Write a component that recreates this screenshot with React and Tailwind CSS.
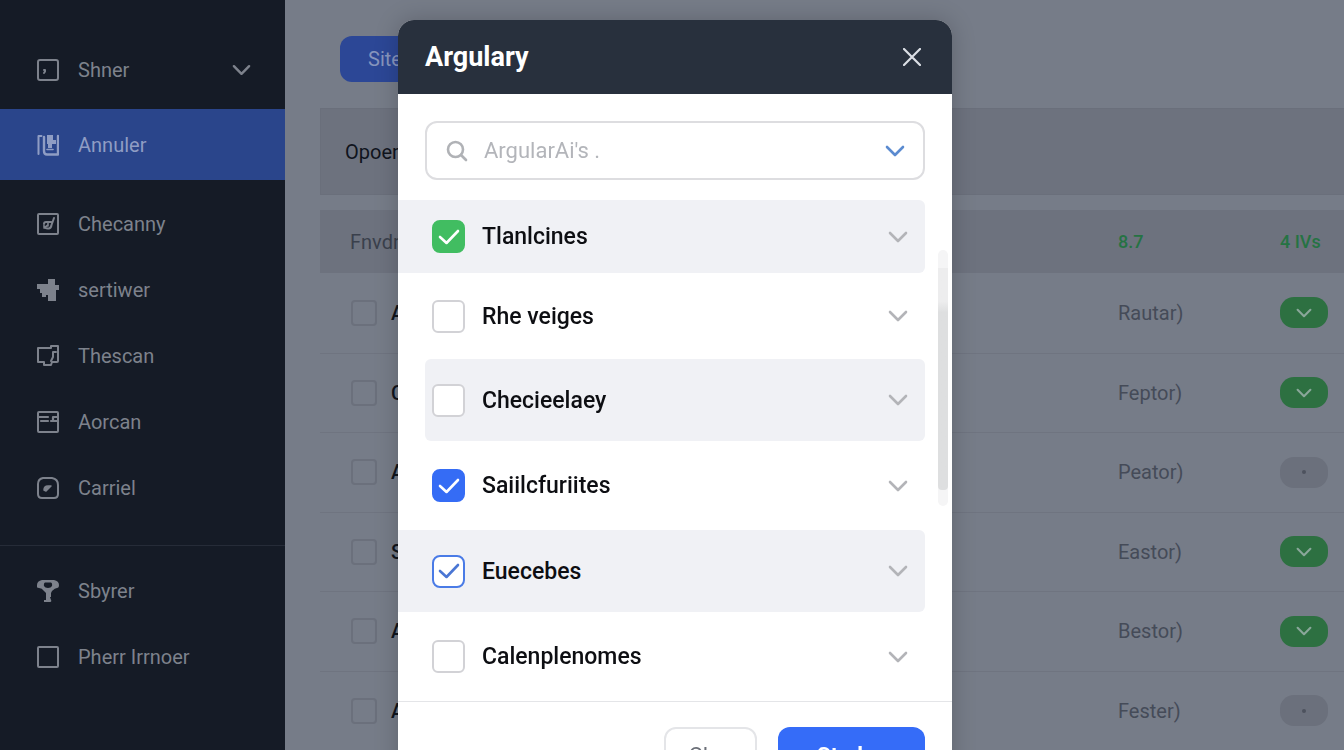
import React, { useState } from 'react';

const stroke = {
    fill: 'none',
    stroke: 'currentColor',
    strokeWidth: 2,
    strokeLinecap: 'round',
    strokeLinejoin: 'round',
};

const Chevron = ({ className }) => (
    <svg viewBox="0 0 20 12" className={className} {...stroke} strokeWidth={2.6} aria-hidden="true">
        <path d="M2 2l8 8 8-8" />
    </svg>
);

const Check = ({ className }) => (
    <svg viewBox="0 0 22 16" className={className} {...stroke} strokeWidth={2.6} aria-hidden="true">
        <path d="M2 8l6.5 6L20 2" />
    </svg>
);

// Ícones do menu lateral, todos numa grade de 22x22
const icons = {
    panel: (
        <>
            <rect x="1" y="1" width="20" height="20" rx="2" />
            <path d="M7 11h1v1.500l-1 1.500" />
        </>
    ),
    book: (
        <>
            <path d="M1.500 20V2h3" />
            <path d="M7 3v14q0 3.500 3 3.500h11V2" strokeWidth="2.4" />
            <path d="M10 1h6v5h3v4h-4v4h-4v-4h-1z" fill="currentColor" stroke="none" />
            <path d="M10 15.500h6" strokeWidth="1.600" />
        </>
    ),
    checkbox: (
        <>
            <rect x="1" y="1" width="20" height="20" rx="1" />
            <path d="M14 9H9q-2 0-2 2M7 13q1 3 5 2.500 2-.5 2.500-3.500L17 5" />
            <path d="M11 9v4M7 15l4-3" strokeWidth="1.600" />
        </>
    ),
    plugin: (
        <path
            d="M0 5h11V0h7v6h5v5h-4v11h-8v-6H9v2H5v-4H3v-4H0z"
            fill="currentColor"
            stroke="none"
        />
    ),
    chat: (
        <>
            <path d="M14 3H1v14h6v3h7l1-3h5q1 0 1-1V1h-7z" />
            <path d="M19 7h-3v5l-2 4" />
        </>
    ),
    table: (
        <>
            <rect x="1" y="1" width="20" height="20" rx="1" />
            <path d="M1 6h10M4 10h7M14 10h2V6h4M16 10h4" strokeWidth="2.200" />
        </>
    ),
    gauge: (
        <>
            <path d="M6 1h9q6 1 6 7v9q0 4-4 4H5q-4 0-4-4V7q0-5 5-6z" />
            <path d="M7 13q0-4 4-4h3l-5 5z" fill="currentColor" strokeWidth="1.500" />
        </>
    ),
    lamp: (
        <>
            <path
                d="M5 0h12q5 1 5 5 0 3-2 3t-5 3l-1 2v4h-1l1 3q1 2-1 2H7v-2h2v-7L7 11Q5 8 2 8T0 5q0-4 5-5zM8 2.500Q6.500 3 7 6q1 2 4 2t4-2q.5-3-1-3.500z"
                fill="currentColor"
                fillRule="evenodd"
                stroke="none"
            />
        </>
    ),
    square: <rect x="1" y="1" width="20" height="20" rx="1" />,
};

const MenuIcon = ({ name }) => (
    <svg viewBox="0 0 22 22" className="w-[22px] h-[22px] shrink-0" {...stroke} aria-hidden="true">
        {icons[name]}
    </svg>
);

const menuItems = [
    { icon: 'checkbox', label: 'Checanny' },
    { icon: 'plugin', label: 'sertiwer' },
    { icon: 'chat', label: 'Thescan' },
    { icon: 'table', label: 'Aorcan' },
    { icon: 'gauge', label: 'Carriel' },
];

const footerItems = [
    { icon: 'lamp', label: 'Sbyrer' },
    { icon: 'square', label: 'Pherr Irrnoer' },
];

const rows = [
    { name: 'A', role: 'Rautar)', active: true },
    { name: 'C', role: 'Feptor)', active: true },
    { name: 'A', role: 'Peator)', active: false },
    { name: 'S', role: 'Eastor)', active: true },
    { name: 'A', role: 'Bestor)', active: true },
    { name: 'A', role: 'Fester)', active: false },
];

const initialOptions = [
    { label: 'Tlanlcines', checked: true, tone: 'green', row: 'h-[73px] pl-[34px] bg-[#f0f1f5]' },
    { label: 'Rhe veiges', checked: false, tone: 'blue', row: 'h-[86px] pl-[34px]' },
    { label: 'Checieelaey', checked: false, tone: 'blue', row: 'h-[82px] ml-[27px] pl-[7px] rounded-l-md bg-[#f0f1f5]' },
    { label: 'Saiilcfuriites', checked: true, tone: 'blue', row: 'h-[89px] pl-[34px]' },
    { label: 'Euecebes', checked: true, tone: 'outline', row: 'h-[82px] pl-[34px] bg-[#f0f1f5]' },
    { label: 'Calenplenomes', checked: false, tone: 'blue', row: 'h-[89px] pl-[34px]' },
];

const boxTones = {
    green: 'border-[#41bd61] bg-[#41bd61]',
    blue: 'border-[#356cf5] bg-[#356cf5]',
    outline: 'border-[#4a7be6] bg-white',
};

const MenuLink = ({ icon, label }) => (
    <a href="#" className="flex items-center h-[66px] pl-[37px] gap-[19px] text-xl text-[#7d828c]">
        <MenuIcon name={icon} />
        {label}
    </a>
);

const Sidebar = () => (
    <nav className="w-[285px] shrink-0 bg-[#151b26] pt-[31px]">
        <button className="flex items-center w-full h-[78px] pl-[37px] pr-[34px] gap-[19px] text-xl text-[#7d828c]">
            <MenuIcon name="panel" />
            Shner
            <Chevron className="w-[19px] h-3 ml-auto" />
        </button>
        <a href="#" className="flex items-center h-[71px] pl-[37px] gap-[19px] text-xl text-[#8f9dc4] bg-[#2a458b]">
            <MenuIcon name="book" />
            Annuler
        </a>
        <div className="pt-[11px] pb-6 border-b border-[#262c38]">
            {menuItems.map((item) => <MenuLink key={item.label} {...item} />)}
        </div>
        <div className="pt-3">
            {footerItems.map((item) => <MenuLink key={item.label} {...item} />)}
        </div>
    </nav>
);

const StatusPill = ({ active }) => (
    <span
        className={`flex items-center justify-center w-12 h-[31px] rounded-[14px] ${
            active ? 'bg-[#2d7041] text-[#8aa79a]' : 'bg-[#6b707c] text-[#4d525e]'
        }`}
    >
        {active ? <Chevron className="w-4 h-[10px]" /> : <span className="w-1 h-1 rounded-full bg-current" />}
    </span>
);

const MainContent = () => (
    <main className="flex-1 min-w-0 bg-[#767c88] pl-[35px]">
        <div className="pt-9 pl-5 pb-[26px]">
            <button className="h-[46px] px-7 rounded-xl bg-[#2c4796] text-xl text-[#8795bd]">Site</button>
        </div>
        <section className="flex items-center h-[87px] pl-6 bg-[#6d727e] border-l border-y border-[#6a6f7b] text-xl text-[#10141d]">
            Opoer
        </section>
        <table className="w-full mt-[15px] table-fixed text-left">
            <colgroup>
                <col className="w-[71px]" />
                <col />
                <col className="w-[162px]" />
                <col className="w-16" />
            </colgroup>
            <thead>
                <tr className="h-[63px] bg-[#6d727e] text-lg text-[#257343]">
                    <th colSpan={2} className="pl-[30px] text-xl font-normal text-[#3a404c]">Fnvdr</th>
                    <th className="font-medium">8.7</th>
                    <th className="font-medium">4 IVs</th>
                </tr>
            </thead>
            <tbody>
                {rows.map((row, i) => (
                    <tr key={i} className="h-[79px] odd:h-20 border-b border-[#6f7480]">
                        <td className="pl-[31px]">
                            <input
                                type="checkbox"
                                aria-label={row.name}
                                className="block appearance-none w-[26px] h-[26px] rounded border-2 border-[#6b707c]"
                            />
                        </td>
                        <td className="text-xl font-medium text-[#10141d]">{row.name}</td>
                        <td className="text-xl text-[#454b58]">{row.role}</td>
                        <td><StatusPill active={row.active} /></td>
                    </tr>
                ))}
            </tbody>
        </table>
    </main>
);

const OptionRow = ({ option, onToggle }) => {
    const id = `option-${option.label.replace(' ', '-')}`;
    return (
        <li className={`flex items-center pr-[17px] rounded-r-md ${option.row}`}>
            <span className="grid w-[33px] h-[33px] shrink-0">
                <input
                    id={id}
                    type="checkbox"
                    checked={option.checked}
                    onChange={onToggle}
                    className={`col-start-1 row-start-1 appearance-none w-[33px] h-[33px] border-2 ${
                        option.checked ? `rounded-lg ${boxTones[option.tone]}` : 'rounded-md border-[#d2d2d6] bg-white'
                    }`}
                />
                {option.checked && (
                    <Check
                        className={`col-start-1 row-start-1 place-self-center w-[22px] h-4 pointer-events-none ${
                            option.tone === 'outline' ? 'text-[#4a76d4]' : 'text-white'
                        }`}
                    />
                )}
            </span>
            <label htmlFor={id} className="flex-1 pt-0.5 pl-[17px] text-[23px] font-medium text-[#0d0e12]">{option.label}</label>
            <button aria-label={`Abrir ${option.label}`}>
                <Chevron className="block w-5 h-3 text-[#b3b4b8]" />
            </button>
        </li>
    );
};

const App = () => {
    const [options, setOptions] = useState(initialOptions);
    const [search, setSearch] = useState('');

    const toggleOption = (index) => {
        setOptions(options.map((o, i) => (i === index ? { ...o, checked: !o.checked } : o)));
    };

    return (
        <div className="flex h-screen overflow-hidden font-['Roboto',sans-serif]">
            <Sidebar />
            <MainContent />

            <div className="fixed inset-0 flex items-start justify-center pt-5 pl-1.5 overflow-hidden">
                <div role="dialog" aria-labelledby="dialog-title" className="w-full max-w-[554px] rounded-2xl bg-white shadow-[0_0_24px_rgba(0,0,0,0.2)]">
                    <header className="flex items-center justify-between h-[74px] pl-[27px] pr-[31px] rounded-t-2xl bg-[#28303d]">
                        <h1 id="dialog-title" className="text-[27px] font-bold text-white">Argulary</h1>
                        <button aria-label="Fechar">
                            <svg viewBox="0 0 18 18" className="block w-[18px] h-[18px] text-[#dcdfe6]" {...stroke} strokeWidth={2.2}>
                                <path d="M1 1l16 16M17 1L1 17" />
                            </svg>
                        </button>
                    </header>

                    <div className="px-[27px] pt-[27px] pb-5">
                        <div className="flex items-center h-[59px] pl-[19px] pr-[18px] gap-4 rounded-xl border-2 border-[#dddde0]">
                            <svg viewBox="0 0 22 22" className="w-[22px] h-[22px] shrink-0 text-[#b0b2b6]" {...stroke} strokeWidth={2.6}>
                                <circle cx="9.500" cy="9.500" r="7.500" />
                                <path d="M15 15l5 5" />
                            </svg>
                            <input
                                type="text"
                                aria-label="Pesquisar"
                                placeholder="ArgularAi's ."
                                value={search}
                                onChange={(e) => setSearch(e.target.value)}
                                className="flex-1 min-w-0 text-[22px] outline-none placeholder:text-[#b3b5ba]"
                            />
                            <Chevron className="w-5 h-3 text-[#5b8bd0]" />
                        </div>
                    </div>

                    <div className="flex items-start">
                        <ul className="flex-1">
                            {options.map((option, i) => (
                                <OptionRow key={option.label} option={option} onToggle={() => toggleOption(i)} />
                            ))}
                        </ul>
                        <div className="w-[27px] pt-[50px] pl-[13px]">
                            <div className="w-[10px] h-64 pt-[18px] rounded-full bg-[#f5f5f6]">
                                <div className="h-[222px] rounded-b-sm bg-linear-to-b from-[#ededee] from-15% to-[#dedfe0] to-20%" />
                            </div>
                        </div>
                    </div>

                    <footer className="flex justify-end gap-[21px] px-[27px] py-[25px] border-t border-[#e4e5e8]">
                        <button className="h-14 px-[23px] rounded-xl border-2 border-[#e4e5e8] text-[22px] text-[#6b6f78]">Clos</button>
                        <button className="h-14 px-[39px] rounded-xl bg-[#356cf8] text-[22px] font-bold text-white">Studes</button>
                    </footer>
                </div>
            </div>
        </div>
    );
};

export default App;
